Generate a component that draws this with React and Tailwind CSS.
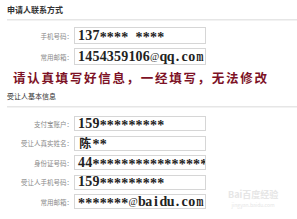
import React from 'react';

const cjk = '"Noto Sans CJK SC", "Noto Sans", sans-serif';
const serif = '"Liberation Serif", "Noto Sans CJK SC", serif';

const applicant = [
  { label: '手机号码：', value: '137**** ****' },
  { label: '常用邮箱：', value: '1454359106@qq.com' },
];

const assignee = [
  { label: '支付宝账户：', value: '159*********' },
  { label: '受让人真实姓名：', value: '陈**' },
  { label: '身份证号码：', value: '44****************' },
  { label: '受让人手机号码：', value: '159*********' },
  { label: '常用邮箱：', value: '*******@baidu.com' },
];

// half-width cells, like the SimSun input font in the screenshot
function Cell({ ch }) {
  if (ch === '*') {
    return <span className="inline-block w-[7.2px] h-[14px] pt-[4px] leading-[10px] text-center">*</span>;
  }
  if (ch === '@') {
    return <span className="inline-block w-[9.6px] text-center text-[10px] font-normal">@</span>;
  }
  if (ch === 'm') {
    return <span className="inline-block w-[7.2px] text-center scale-x-[0.62]">m</span>;
  }
  if (/[\u4e00-\u9fff]/.test(ch)) {
    return <span className="inline-block w-[14.4px] text-center text-[12px]" style={{ fontFamily: cjk }}>{ch}</span>;
  }
  return <span className="inline-block w-[7.2px] text-center">{ch === ' ' ? '\u00a0' : ch}</span>;
}

function Row({ label, value, h }) {
  return (
    <div className="flex items-center">
      <span className="w-[74px] shrink-0 pr-[1px] text-right text-[6.5px] leading-[8px] text-[#8a8a8a] whitespace-nowrap">
        {label}
      </span>
      <div
        className={`w-[132px] ${h} border border-[#d6d6d6] bg-white pl-[3px] flex items-center overflow-hidden`}
      >
        <span
          className="flex items-center text-[14px] leading-[14px] font-bold text-[#222] whitespace-nowrap"
          style={{ fontFamily: serif }}
        >
          {value.split('').map((ch, i) => (
            <Cell key={i} ch={ch} />
          ))}
        </span>
      </div>
    </div>
  );
}

export default function App() {
  return (
    <div
      className="relative w-[297px] h-[219px] bg-white overflow-hidden flex flex-col"
      style={{ fontFamily: cjk }}
    >
      <div className="pl-[7px] pt-[5px] text-[8px] leading-[9px] font-bold text-[#333]">申请人联系方式</div>
      <div className="mt-[5px] ml-[7px] h-[2px] bg-[#e6e6e6] border-b border-[#f2f2f2]" />

      <div className="mt-[6px] flex flex-col gap-[4px]">
        {applicant.map(r => (
          <Row key={r.label} {...r} h="h-[17px]" />
        ))}
      </div>

      <div className="mt-[6px] pl-[13px] h-[14px] text-[12.5px] leading-[14px] font-bold tracking-[1.7px] text-[#7d1226] whitespace-nowrap">
        请认真填写好信息，一经填写，无法修改
      </div>

      <div className="mt-[7px] pl-[7px] text-[7px] leading-[9px] text-[#333]">受让人基本信息</div>
      <div className="mt-[5px] ml-[7px] h-[2px] bg-[#e6e6e6] border-b border-[#f2f2f2]" />

      <div className="mt-[8px] flex flex-col gap-[4.5px]">
        {assignee.map(r => (
          <Row key={r.label} {...r} h="h-[15px]" />
        ))}
      </div>

      <div className="absolute left-[228px] top-[190px] flex flex-col items-center gap-[2px] text-[#e6e6e6]">
        <span className="text-[9px] leading-[10px] font-bold">Bai百度经验</span>
        <span className="text-[5px] leading-[5px]">jingyan.baidu.com</span>
      </div>
    </div>
  );
}
